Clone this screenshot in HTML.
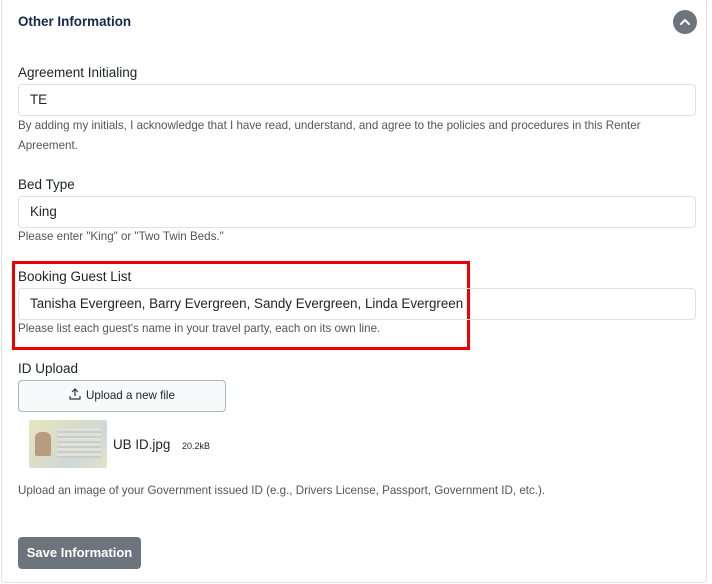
<!DOCTYPE html>
<html><head><style>
*{box-sizing:border-box;margin:0;padding:0}
body{width:712px;height:584px;background:#fff;font-family:"Liberation Sans",Arial,sans-serif;color:#212529;position:relative;overflow:hidden}
.card{position:absolute;left:1px;top:-2px;width:706px;height:585px;border:1px solid #dee2e6;border-radius:4px}
.abs{position:absolute}
.lbl{position:absolute;left:18px;font-size:13.5px;line-height:16px}
.inp{position:absolute;left:18px;width:678px;height:32px;border:1px solid #dee2e6;border-radius:4px;font-size:13.4px;padding:0 11px;line-height:30px}
.help{position:absolute;left:18px;font-size:11.6px;color:#555;line-height:20px}
</style></head><body>
<div class="card"></div>
<div class="abs" style="left:18px;top:14px;font-size:13.4px;font-weight:bold;color:#14284b">Other Information</div>
<div class="abs" style="left:673px;top:10px;width:24px;height:24px;border-radius:50%;background:#6c757d">
<svg width="24" height="24" viewBox="0 0 24 24"><path d="M8 14 L12 10 L16 14" stroke="#fff" stroke-width="2" fill="none" stroke-linecap="round"/></svg></div>

<div class="lbl" style="top:65px">Agreement Initialing</div>
<div class="inp" style="top:84px">TE</div>
<div class="help" style="top:116px;width:660px">By adding my initials, I acknowledge that I have read, understand, and agree to the policies and procedures in this Renter Apreement.</div>

<div class="lbl" style="top:177px">Bed Type</div>
<div class="inp" style="top:196px">King</div>
<div class="help" style="top:227px">Please enter "King" or "Two Twin Beds."</div>

<div class="abs" style="left:12px;top:261px;width:458px;height:89px;border:3px solid #e00"></div>
<div class="lbl" style="top:269px">Booking Guest List</div>
<div class="inp" style="top:288px">Tanisha Evergreen, Barry Evergreen, Sandy Evergreen, Linda Evergreen</div>
<div class="help" style="top:319px">Please list each guest's name in your travel party, each on its own line.</div>

<div class="lbl" style="top:361px">ID Upload</div>
<div class="abs" style="left:18px;top:380px;width:208px;height:32px;border:1px solid #adb5bd;border-radius:4px;background:#f8f9fa;font-size:11.6px;text-align:center;line-height:30px">
<svg width="12" height="12" viewBox="0 0 12 12" style="vertical-align:-1px;margin-right:5px"><path d="M6 8V1M3 4l3-3 3 3M1 8v3h10V8" stroke="#333" stroke-width="1.2" fill="none"/></svg>Upload a new file</div>
<div class="abs" style="left:29px;top:420px;width:78px;height:48px;background:linear-gradient(135deg,#e8e6c0,#d9dcc8 40%,#cfd8d8 70%,#e4e2c8);border-radius:2px">
<div class="abs" style="left:6px;top:12px;width:16px;height:24px;background:#b89c80;border-radius:6px 6px 2px 2px"></div>
<div class="abs" style="left:28px;top:8px;width:44px;height:30px;background:repeating-linear-gradient(0deg,#c8cccc 0 2px,#e0e2d6 2px 5px)"></div></div>
<div class="abs" style="left:113px;top:437px;font-size:13.4px">UB ID.jpg <span style="font-size:9px;margin-left:8px">20.2kB</span></div>
<div class="help" style="top:481px">Upload an image of your Government issued ID (e.g., Drivers License, Passport, Government ID, etc.).</div>

<div class="abs" style="left:18px;top:537px;width:123px;height:32px;background:#6c757d;border-radius:4px;color:#fff;font-size:13px;font-weight:bold;text-align:center;line-height:32px">Save Information</div>
</body></html>
